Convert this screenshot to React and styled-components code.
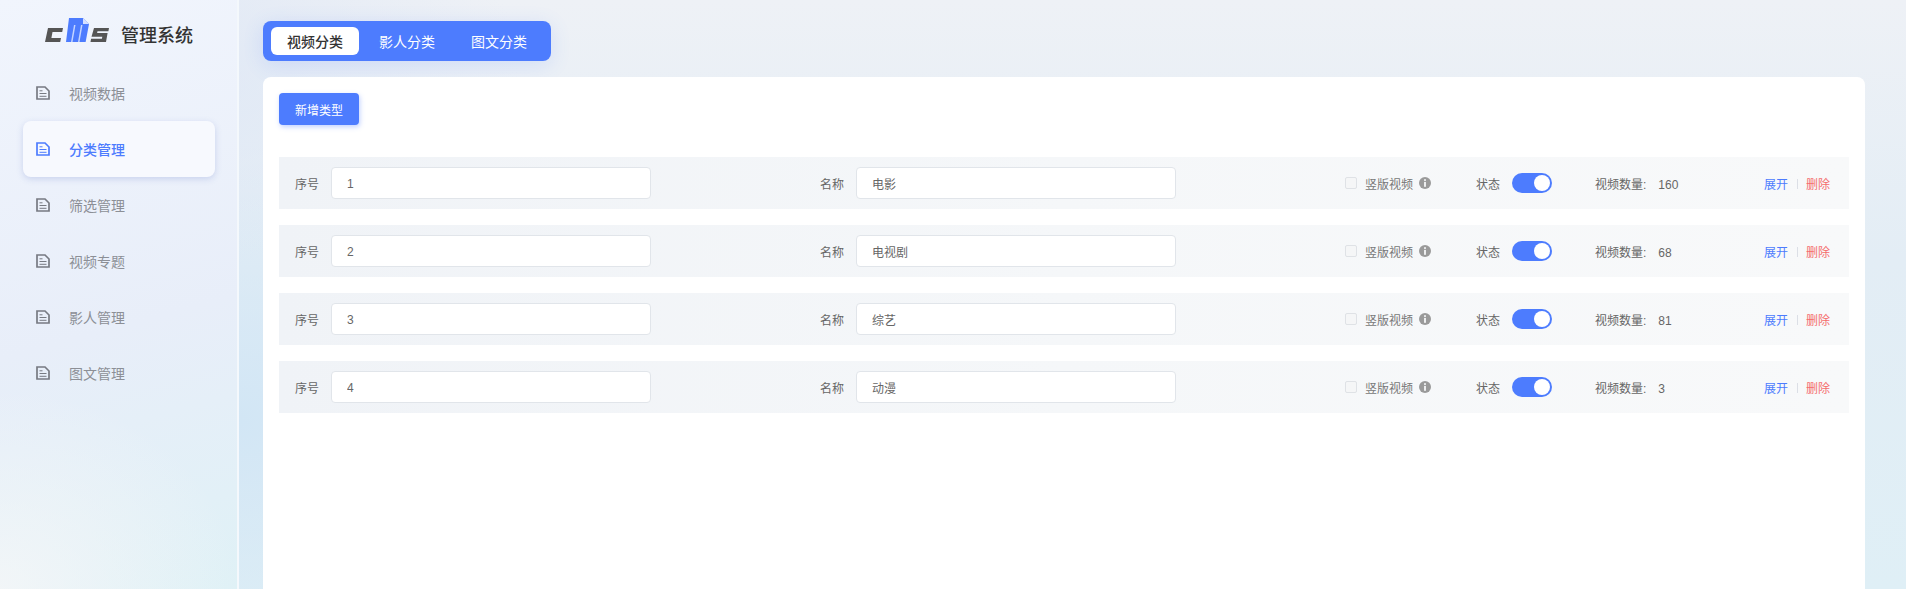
import { useState } from "react";
import styled, { createGlobalStyle } from "styled-components";

const GlobalStyle = createGlobalStyle`
  html, body {
    margin: 0;
    height: 100%;
    overflow: hidden;
  }
  body {
    font-family: "Liberation Sans", "Noto Sans CJK SC", sans-serif;
    background: #fff;
  }
  * {
    box-sizing: border-box;
  }
`;

const Page = styled.div`
  display: flex;
  height: 589px;
  overflow: hidden;
  background:
    radial-gradient(ellipse 520px 230px at 0 60px, #dbe5f5 0%, rgba(219, 229, 245, 0) 100%),
    radial-gradient(ellipse 300px 260px at 240px 420px, #d2e6f5 0%, rgba(210, 230, 245, 0) 100%),
    linear-gradient(180deg, #eef1f6 0%, #e3edf5 260px, #dfeff6 100%);
`;

const Sidebar = styled.aside`
  width: 239px;
  flex-shrink: 0;
  display: flex;
  flex-direction: column;
  border-right: 2px solid #f4f8fc;
  background:
    radial-gradient(ellipse 240px 200px at 0 100%, rgba(246, 247, 248, 0.8) 0%, rgba(246, 247, 248, 0) 100%),
    linear-gradient(165deg, #f1f5fd 0%, #e8eef9 55%, #dff1f6 100%);
`;

const LogoRow = styled.div`
  height: 65px;
  display: flex;
  align-items: center;
  padding: 3px 0 0 45px;
  gap: 12px;
`;

const LogoTitle = styled.span`
  font-size: 18px;
  font-weight: 500;
  color: #333;
`;

const Menu = styled.nav`
  display: flex;
  flex-direction: column;
  padding: 0 22px 0 23px;
`;

const MenuItem = styled.a`
  height: 56px;
  display: flex;
  align-items: center;
  gap: 19px;
  padding-left: 13px;
  border-radius: 8px;
  font-size: 14px;
  color: ${(p) => (p.$active ? "#4d7cfe" : "#8c8f96")};
  background: ${(p) => (p.$active ? "#f7f9fe" : "transparent")};
  box-shadow: ${(p) => (p.$active ? "0 2px 6px rgba(120, 140, 210, 0.3)" : "none")};
  font-weight: ${(p) => (p.$active ? 500 : 400)};
`;

const MenuIcon = styled.span`
  display: flex;
  color: ${(p) => (p.$active ? "#4d7cfe" : "#777a82")};
`;

const Main = styled.main`
  flex: 1;
  min-width: 0;
  display: flex;
  flex-direction: column;
  padding: 21px 41px 0 24px;
  gap: 16px;
`;

const Tabs = styled.div`
  align-self: flex-start;
  display: flex;
  gap: 4px;
  padding: 6px 8px;
  height: 40px;
  border-radius: 8px;
  background: #4d7cfe;
  box-shadow: 0 4px 20px rgba(77, 124, 254, 0.16);
`;

const Tab = styled.div`
  width: 88px;
  display: flex;
  align-items: center;
  justify-content: center;
  font-size: 14px;
  border-radius: 6px;
  color: ${(p) => (p.$active ? "#333" : "#fff")};
  background: ${(p) => (p.$active ? "#fff" : "transparent")};
  font-weight: ${(p) => (p.$active ? 500 : 400)};
`;

const Card = styled.section`
  flex: 1;
  margin-bottom: -20px;
  padding: 16px;
  border-radius: 8px;
  background: #fff;
`;

const AddButton = styled.button`
  display: block;
  width: 80px;
  height: 32px;
  padding: 0;
  border: none;
  border-radius: 4px;
  background: #4d7cfe;
  color: #fff;
  font: inherit;
  font-size: 12px;
  box-shadow: 1px 2px 5px rgba(77, 124, 254, 0.35);
`;

const Rows = styled.div`
  margin-top: 32px;
  display: flex;
  flex-direction: column;
  gap: 16px;
`;

const Row = styled.div`
  height: 52px;
  display: flex;
  align-items: center;
  padding: 0 19px 0 16px;
  font-size: 12px;
  color: #666;
  background: linear-gradient(90deg, #f0f3f7 0%, #f5f7f9 50%, #f8f9fa 100%);
`;

const Field = styled.label`
  display: flex;
  align-items: center;
  gap: 12px;
  width: ${(p) => p.$width}px;
  flex-shrink: 0;
`;

const TextInput = styled.input`
  width: 320px;
  height: 32px;
  padding: 1px 15px 0;
  border: 1px solid #e1e5ea;
  border-radius: 4px;
  background: #fff;
  color: #666;
  font: inherit;
  font-size: 12px;
  outline: none;
`;

const VerticalOption = styled.div`
  margin-left: auto;
  width: 131px;
  display: flex;
  align-items: center;
  color: #777;
`;

const Check = styled.span`
  width: 12px;
  height: 12px;
  margin-right: 8px;
  border: 1px solid #dfe2e6;
  border-radius: 2px;
  background: #f5f6f7;
`;

const InfoDot = styled.span`
  width: 12px;
  height: 12px;
  margin-left: 6px;
  color: #9a9a9a;
  display: flex;
`;

const StatusGroup = styled.div`
  width: 119px;
  display: flex;
  align-items: center;
  gap: 12px;
`;

const Switch = styled.button`
  width: 40px;
  height: 20px;
  padding: 2px;
  border: none;
  border-radius: 10px;
  display: flex;
  justify-content: ${(p) => (p.$on ? "flex-end" : "flex-start")};
  background: ${(p) => (p.$on ? "#4d7cfe" : "#ccc")};

  &::after {
    content: "";
    width: 16px;
    height: 16px;
    border-radius: 50%;
    background: #fff;
  }
`;

const Count = styled.div`
  width: 169px;
  display: flex;
  align-items: baseline;
  gap: 12px;
`;

const Actions = styled.div`
  display: flex;
  align-items: center;
  padding-top: 1px;
`;

const ActionLink = styled.a`
  color: ${(p) => (p.$danger ? "#f56c6c" : "#4d7cfe")};
`;

const Divider = styled.span`
  width: 1px;
  height: 10px;
  margin: 0 8px 0 9px;
  background: #dcdfe6;
`;

const DocIcon = () => (
  <svg width="14" height="14" viewBox="0 0 14 14" fill="none">
    <path d="M1 1h8l4 4v8H1z" stroke="currentColor" strokeWidth="1.7" />
    <path d="M3.500 4.800h3M3.500 7.500h7M3.500 10.300h7" stroke="currentColor" strokeWidth="1" />
  </svg>
);

const InfoIcon = () => (
  <svg width="12" height="12" viewBox="0 0 12 12">
    <circle cx="6" cy="6" r="6" fill="currentColor" />
    <rect x="5.100" y="2.200" width="1.800" height="1.700" fill="#f7f8f9" />
    <rect x="5.100" y="4.900" width="1.800" height="4.900" fill="#f7f8f9" />
  </svg>
);

// taller than what it draws so the mark sits above the title's centre line
const Logo = () => (
  <svg width="64" height="34" viewBox="0 0 64 34">
    <path d="M3 11h15l-.8 4H7.500l-1.100 6H16l-.8 4H0z" fill="#555" />
    <path d="M24 1h14l6 6-3.400 18H21z" fill="#4d7cfe" />
    <path d="M38 1l6 6h-6z" fill="#d5e0ff" />
    <path d="M29 8h1.500l-3 17H26zM36 8h1.500l-3 17H33z" fill="#c4d4ff" />
    <path d="M49 11h15l-.6 3.200H52.500l-.4 1.800h10.500L61 25H45.500l.6-3.200h10.800l.4-2H46.500z" fill="#555" />
  </svg>
);

const menus = ["视频数据", "分类管理", "筛选管理", "视频专题", "影人管理", "图文管理"];
const tabs = ["视频分类", "影人分类", "图文分类"];
const initialRows = [
  { id: 1, name: "电影", count: 160 },
  { id: 2, name: "电视剧", count: 68 },
  { id: 3, name: "综艺", count: 81 },
  { id: 4, name: "动漫", count: 3 },
];

export default function App() {
  const [rows] = useState(initialRows);

  return (
    <Page>
      <GlobalStyle />
      <Sidebar>
        <LogoRow>
          <Logo />
          <LogoTitle>管理系统</LogoTitle>
        </LogoRow>
        <Menu>
          {menus.map((m) => (
            <MenuItem key={m} $active={m === "分类管理"}>
              <MenuIcon $active={m === "分类管理"}>
                <DocIcon />
              </MenuIcon>
              {m}
            </MenuItem>
          ))}
        </Menu>
      </Sidebar>
      <Main>
        <Tabs>
          {tabs.map((t, i) => (
            <Tab key={t} $active={i === 0}>
              {t}
            </Tab>
          ))}
        </Tabs>
        <Card>
          <AddButton>新增类型</AddButton>
          <Rows>
            {rows.map((r) => (
              <Row key={r.id}>
                <Field $width={525}>
                  序号
                  <TextInput defaultValue={r.id} />
                </Field>
                <Field $width={356}>
                  名称
                  <TextInput defaultValue={r.name} />
                </Field>
                <VerticalOption>
                  <Check />
                  竖版视频
                  <InfoDot>
                    <InfoIcon />
                  </InfoDot>
                </VerticalOption>
                <StatusGroup>
                  状态
                  <Switch $on />
                </StatusGroup>
                <Count>
                  <span>视频数量:</span>
                  <span>{r.count}</span>
                </Count>
                <Actions>
                  <ActionLink>展开</ActionLink>
                  <Divider />
                  <ActionLink $danger>删除</ActionLink>
                </Actions>
              </Row>
            ))}
          </Rows>
        </Card>
      </Main>
    </Page>
  );
}
